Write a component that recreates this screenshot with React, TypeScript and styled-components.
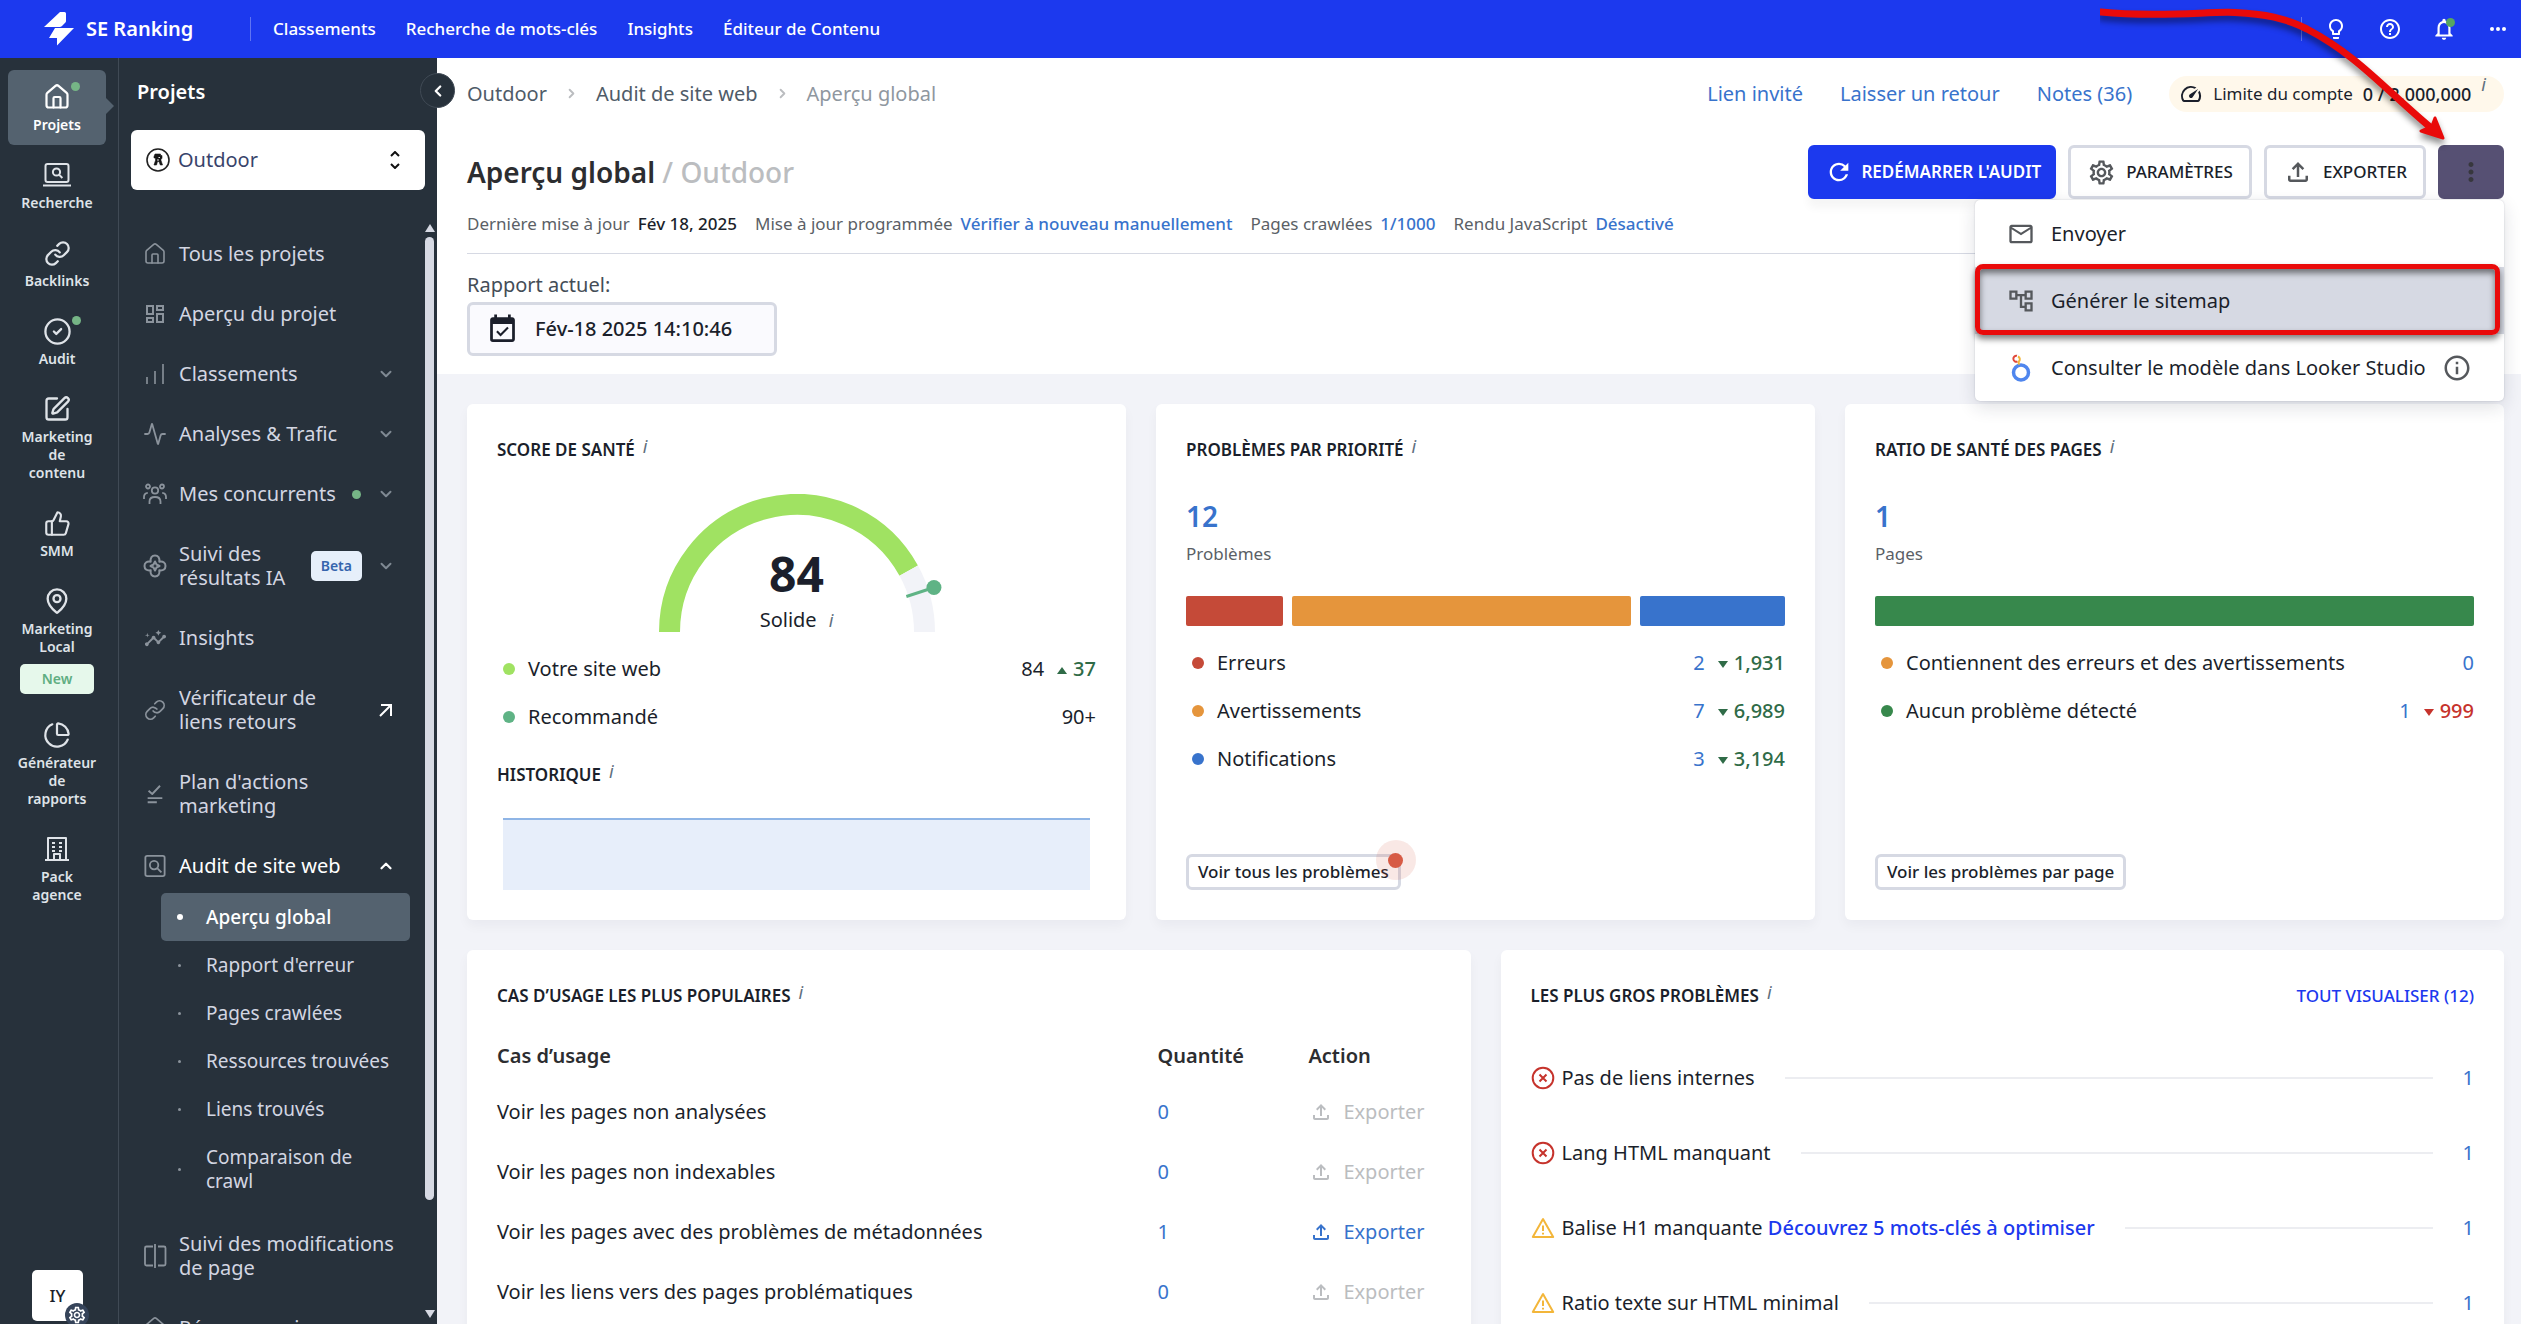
import React from "react";
import styled, { createGlobalStyle, css } from "styled-components";
import {
  MdOutlineAccountTree, MdOutlineFileUpload, MdOutlineSettings, MdOutlineSpeed,
  MdLightbulbOutline, MdHelpOutline, MdNotificationsNone, MdEventAvailable,
  MdMailOutline, MdRefresh, MdInsights, MdOutlineDashboard, MdMoreVert, MdInfoOutline,
} from "react-icons/md";
import {
  House, Link, CircleCheck, SquarePen, ThumbsUp, MapPin, ChartPie, Activity,
  ChevronDown, ChevronUp, ChevronLeft, ChevronRight,
} from "lucide-react";

const c = {
  brand: "#1c39ee", dark: "#27313b", active: "#54626f", line: "#d6d9e3", bg: "#f2f3f8",
  link: "#3873cc", ink: "#1b1f2b", grey: "#5b5f66", faint: "#bbbdc0", green: "#2f6b47",
};

const Global = createGlobalStyle`
  *, *::before, *::after { box-sizing: border-box; }
  body { margin: 0; font-family: "Noto Sans", "Open Sans", sans-serif; font-size: 20px; line-height: 24px; color: ${c.ink}; }
  a { color: inherit; text-decoration: none; }
  button, select { font: inherit; color: inherit; cursor: pointer; }
  ul { list-style: none; margin: 0; padding: 0; }
  h1, h2, p { margin: 0; font: inherit; }
  svg { flex: none; display: block; }
`;

const Shell = styled.div`
  position: relative; display: flex; flex-direction: column; height: 100vh; overflow: hidden; background: ${c.bg};
`;
const Body = styled.div`display: flex; flex: 1; min-height: 0;`;

/* ---------- top bar ---------- */
const TopBar = styled.header`
  display: flex; align-items: center; flex: none; height: 58px; padding: 0 11px 0 44px;
  background: ${c.brand}; color: #fff; font-size: 17px; font-weight: 500;
`;
const Brand = styled.a`display: flex; align-items: center; gap: 12px; width: 206px; font-size: 20px; font-weight: 600;`;
const TopNav = styled.nav`display: flex; gap: 30px; flex: 1; padding-left: 22px;`;
const Rule = styled.span`width: 1px; height: 24px; background: rgba(255, 255, 255, 0.3);`;
const TopIcons = styled.div`display: flex; align-items: center; gap: 30px; padding-left: 22px;`;
const IconButton = styled.button`
  position: relative; display: flex; align-items: center; justify-content: center;
  width: 24px; height: 24px; padding: 0; border: 0; background: none; color: #fff;
`;
const Dot = styled.span<{ $color: string; $size?: number }>`
  flex: none; width: ${(p) => p.$size ?? 12}px; height: ${(p) => p.$size ?? 12}px; border-radius: 50%; background: ${(p) => p.$color};
`;
const BellDot = styled(Dot)`position: absolute; top: 1px; right: 1px;`;
const RailDot = styled(Dot)`position: absolute; top: -3px; right: -9px;`;

/* ---------- icon rail ---------- */
const Rail = styled.nav`
  display: flex; flex-direction: column; flex: none; width: 119px; padding: 12px 12px 3px 8px;
  background: ${c.dark}; border-right: 1px solid #404a55; color: #dfe3e8;
`;
const RailList = styled.ul`display: flex; flex-direction: column; gap: 3px; width: 98px;`;
const RailItem = styled.a<{ $active?: boolean }>`
  position: relative; display: flex; flex-direction: column; align-items: center; gap: 7px; padding: 15px 0 11px;
  border-radius: 6px; font-size: 14px; line-height: 18px; font-weight: 600; text-align: center;
  ${(p) => p.$active && css`
    background: ${c.active}; color: #fff;
    &::after { content: ""; position: absolute; right: -8px; top: 28px; border: 8px solid transparent; border-right: 0; border-left-color: ${c.active}; }
  `}
`;
const RailIcon = styled.span`
  position: relative; display: flex; height: 24px; align-items: center;
`;
const NewBadge = styled.span`
  width: 74px; margin-top: 1px; border-radius: 5px; background: #e6f8eb; color: #5fae82; line-height: 30px;
`;
const Avatar = styled.button`
  position: relative; width: 51px; height: 51px; margin: auto 0 0 24px; padding: 0; border: 0; border-radius: 5px;
  background: #fff; color: ${c.ink}; font-size: 17px; font-weight: 500;
`;
const AvatarGear = styled.span`
  position: absolute; right: -6px; bottom: -6px; display: flex; align-items: center; justify-content: center;
  width: 24px; height: 24px; border-radius: 50%; background: #36445a; color: #fff;
`;

/* ---------- side menu ---------- */
const Side = styled.aside`
  position: relative; display: flex; flex-direction: column; flex: none; width: 318px; background: ${c.dark}; color: #d3d6e2;
`;
const SideTitle = styled.h2`padding: 22px 18px 20px; color: #fff; font-weight: 600;`;
const Collapse = styled.button`
  position: absolute; z-index: 2; right: -18px; top: 15px; display: flex; align-items: center; justify-content: center;
  width: 35px; height: 35px; padding: 0; border: 1px solid #404a55; border-radius: 50%; background: ${c.dark}; color: #fff;
`;
const ProjectPicker = styled.label`
  display: flex; align-items: center; gap: 8px; height: 60px; margin: 6px 12px 34px; padding: 0 25px 0 15px;
  border-radius: 6px; background: #fff; color: #39446b;
`;
const PickerSelect = styled.select`
  flex: 1; min-width: 0; height: 60px; padding: 0; border: 0; outline: 0; background: none; appearance: none;
`;
const SideScroll = styled.div`display: flex; flex: 1; min-height: 0; overflow: hidden;`;
const SideList = styled.ul`flex: 1; min-width: 0;`;
const SideItem = styled.a<{ $open?: boolean }>`
  display: flex; align-items: center; gap: 12px; padding: ${(p) => (p.$open ? "18px 30px 15px 24px" : "18px 30px 18px 24px")};
  color: ${(p) => (p.$open ? "#fff" : "inherit")};
  > span:first-child { color: #8b939c; }
  > svg:last-child { color: ${(p) => (p.$open ? "#fff" : "#7f8993")}; }
`;
const ItemIcon = styled.span`display: flex; flex: none; justify-content: center; width: 24px;`;
const ItemText = styled.span`flex: 1; margin-right: -12px; white-space: pre-line;`;
const BetaBadge = styled.span`
  padding: 0 10px; margin-right: 3px; border-radius: 5px; background: #e6effa; color: #3564ad; font-size: 14px; line-height: 30px; font-weight: 600;
`;
const DotSlot = styled.span`display: flex; margin-right: 4px;`;
const SubList = styled.ul`margin: 0 15px 9px 42px;`;
const SubItem = styled.a<{ $active?: boolean }>`
  display: flex; align-items: center; gap: 24px; padding: 12px 18px 12px 16px; border-radius: 5px; white-space: pre-line; font-size: 19px;
  ${(p) => p.$active && css`background: ${c.active}; color: #fff; font-weight: 500;`}
`;
const Bullet = styled.span<{ $active?: boolean }>`
  display: flex; justify-content: center; width: 5px;
  &::before { content: ""; width: ${(p) => (p.$active ? 6 : 3)}px; height: ${(p) => (p.$active ? 6 : 3)}px; flex: none; border-radius: 50%; background: ${(p) => (p.$active ? "#fff" : "#8b939c")}; }
`;
const ScrollTrack = styled.div`
  display: flex; flex-direction: column; align-items: center; flex: none; width: 9px; margin-right: 3px; padding-bottom: 6px;
`;
const ScrollArrow = styled.span<{ $down?: boolean }>`
  border: 5px solid transparent; border-top-width: ${(p) => (p.$down ? 8 : 0)}px; border-bottom-width: ${(p) => (p.$down ? 0 : 8)}px;
  border-${(p) => (p.$down ? "top" : "bottom")}-color: ${c.line};
`;
const ScrollThumb = styled.span`flex: 0 0 88%; width: 9px; margin: 5px 0 auto; border-radius: 5px; background: ${c.line};`;

/* ---------- page header ---------- */
const Main = styled.main`flex: 1; min-width: 0;`;
const PageHead = styled.section`padding: 0 17px 18px 30px; background: #fff;`;
const HeadRow = styled.div`display: flex; align-items: center; justify-content: space-between; height: 70px; padding-top: 1px;`;
const Crumbs = styled.nav`
  display: flex; align-items: center; gap: 17px; color: #4f5b68;
  svg { color: ${c.faint}; }
  span { color: #8f979f; }
`;
const HeadLinks = styled.div`display: flex; align-items: center; gap: 37px; color: ${c.link};`;
const LimitPill = styled.div`
  display: flex; align-items: center; gap: 10px; height: 36px; padding: 0 18px 0 10px; border-radius: 18px;
  background: #fff8eb; color: ${c.ink}; font-size: 17px;
  b { font-size: 18px; font-weight: 500; }
`;
const InfoMark = styled.em`
  align-self: flex-start; color: #5f6f7e; font-size: 18px; line-height: 16px; font-weight: 400;
`;
const TitleRow = styled.div`display: flex; align-items: center; justify-content: space-between; margin-top: 17px;`;
const Title = styled.h1`
  color: #2c2d30; font-size: 28px; line-height: 36px; font-weight: 600;
  span { color: ${c.faint}; font-weight: 500; }
`;
const Actions = styled.div`position: relative; display: flex; gap: 12px;`;
const ActionButton = styled.button<{ $kind?: "primary" | "menu" }>`
  display: flex; align-items: center; justify-content: center; gap: 10px; height: 54px; padding: 0 16px;
  border: 3px solid ${c.line}; border-radius: 6px; background: #fff; font-size: 17px; font-weight: 500;
  svg { color: #55585c; }
  ${(p) => p.$kind === "primary" && css`
    gap: 8px; padding: 0 12px 0 14px;
    border-color: ${c.brand}; background: ${c.brand}; color: #fff; font-weight: 600; box-shadow: 0 9px 9px rgba(0, 0, 0, 0.04);
    svg { color: #fff; }
  `}
  ${(p) => p.$kind === "menu" && css`
    width: 66px; padding: 0; border-color: #565073; background: #565073;
    svg { color: #37373d; }
  `}
`;
const Menu = styled.ul`
  position: absolute; z-index: 3; right: 0; top: 55px; width: 529px; border-radius: 5px; background: #fff;
  box-shadow: 0 6px 18px rgba(30, 36, 60, 0.14), 0 0 2px rgba(30, 36, 60, 0.2);
`;
const MenuItem = styled.button<{ $hot?: boolean }>`
  display: flex; align-items: center; gap: 16px; width: 100%; height: 67px; padding: 0 32px; border: 0;
  background: ${(p) => (p.$hot ? "#d6d9e3" : "none")}; text-align: left; white-space: nowrap;
  svg { color: #55585c; }
`;
const RedFrame = styled.li`
  position: absolute; z-index: 4; left: 0; right: 4px; top: 64px; height: 71px; border: 5px solid #e90a0a; border-radius: 8px;
  box-shadow: 0 4px 6px rgba(0, 0, 0, 0.5), inset 0 4px 6px rgba(0, 0, 0, 0.5); pointer-events: none;
`;
const RedArrow = styled.svg`
  position: absolute; z-index: 5; right: 61px; top: 0; pointer-events: none;
  g { filter: drop-shadow(0 5px 3px rgba(0, 0, 0, 0.45)); }
`;
const Meta = styled.dl`
  display: flex; align-items: center; gap: 18px; height: 55px; margin: 0; padding-bottom: 4px; border-bottom: 1px solid ${c.line};
  font-size: 17px; color: ${c.grey};
  div { display: flex; gap: 8px; }
`;
const MetaValue = styled.dd<{ $link?: boolean }>`margin: 0; font-weight: 500; color: ${(p) => (p.$link ? c.link : c.ink)};`;
const ReportLabel = styled.label`display: block; margin: 19px 0 5px; color: #444d57;`;
const ReportButton = styled.button`
  display: flex; align-items: center; gap: 16px; height: 54px; padding: 0 42px 0 16px; border: 3px solid ${c.line};
  border-radius: 6px; background: #fafafe; font-weight: 500;
`;

/* ---------- cards ---------- */
const Content = styled.div`display: grid; gap: 30px; padding: 30px 17px 30px 30px;`;
const CardRow = styled.div<{ $cols: number }>`display: grid; grid-template-columns: repeat(${(p) => p.$cols}, minmax(0, 1fr)); gap: 30px;`;
const Card = styled.section`
  display: flex; flex-direction: column; align-items: stretch; padding: 34px 30px 30px; border-radius: 6px; background: #fff;
  box-shadow: 0 6px 12px rgba(30, 36, 60, 0.04);
`;
const CardHead = styled.div`display: flex; justify-content: space-between;`;
const CardTitle = styled.h2`display: flex; gap: 8px; font-size: 17px; font-weight: 600;`;
const CardLink = styled.a`color: ${c.brand}; font-size: 17px; font-weight: 500;`;
const Gauge = styled.div`position: relative; display: flex; justify-content: center; height: 138px; margin: 32px 0 13px;`;
const GaugeLabel = styled.div`
  position: absolute; inset: 56px 0 0; display: flex; flex-direction: column; align-items: center; gap: 12px;
  b { font-size: 48px; line-height: 48px; }
  span { display: flex; align-items: center; gap: 12px; line-height: 20px; }
  em { align-self: center; line-height: 20px; }
`;
const Legend = styled.li`
  display: flex; align-items: center; gap: 13px; height: 48px; padding-left: 6px;
`;
const LegendName = styled.span`flex: 1;`;
const Count = styled.span<{ $link?: boolean }>`color: ${(p) => (p.$link ? c.link : "inherit")};`;
const Delta = styled.span<{ $color?: string }>`
  display: flex; align-items: center; gap: 6px; color: ${(p) => p.$color ?? c.green}; font-weight: 500;
`;
const Triangle = styled.span<{ $up?: boolean }>`
  margin-top: 3px; border: 5px solid transparent; border-top: ${(p) => (p.$up ? "0" : "7px solid currentColor")}; border-bottom: ${(p) => (p.$up ? "7px solid currentColor" : "0")};
`;
const HistoryTitle = styled.div`margin: 22px 0 31px;`;
const History = styled.div`height: 72px; margin: 0 6px; border-top: 2px solid #8fb5e6; background: #e7eefa;`;
const BigNumber = styled.p`margin: 36px 0 8px; color: ${c.link}; font-size: 28px; line-height: 36px; font-weight: 600;`;
const SmallNote = styled.p`color: ${c.grey}; font-size: 17px;`;
const Bar = styled.div`display: flex; gap: 9px; height: 30px; margin: 30px 0 13px;`;
const Segment = styled.span<{ $color: string; $share: number }>`flex: ${(p) => p.$share} 1 0; border-radius: 2px; background: ${(p) => p.$color};`;
const CardButton = styled.button`
  position: relative; align-self: flex-start; height: 36px; margin-top: auto; padding: 0 9px; border: 3px solid ${c.line}; border-radius: 6px;
  background: none; font-size: 17px; font-weight: 500;
`;
const Pulse = styled.span`
  position: absolute; right: -18px; top: -17px; display: flex; align-items: center; justify-content: center;
  width: 40px; height: 40px; border-radius: 50%; background: rgba(215, 91, 69, 0.14);
`;
const Table = styled.table`
  width: 100%; margin-top: 18px; border-collapse: collapse; text-align: left; table-layout: fixed;
  th { height: 56px; padding: 4px 0 0; font-weight: 600; color: #2c2d30; }
  th:nth-child(1) { width: 70%; } th:nth-child(2) { width: 16%; }
  td { height: 60px; padding: 0; }
  td a { color: ${c.link}; }
`;
const ExportButton = styled.button`
  display: flex; align-items: center; gap: 10px; padding: 0 0 0 1px; border: 0; background: none; color: ${c.link};
  &:disabled { color: ${c.faint}; }
`;
const Issues = styled.ul`margin-top: 32px;`;
const Issue = styled.li`
  display: flex; align-items: center; height: 75px; gap: 7px; color: ${c.ink};
  > a:last-child { color: ${c.link}; }
`;
const IssueText = styled.span`
  a { color: ${c.brand}; font-weight: 500; }
`;
const Leader = styled.span`flex: 1; height: 2px; margin: 0 23px; background: #ecedf1;`;

/* ---------- drawings ---------- */
const S = (p: { size?: number; w?: number; children: React.ReactNode }) => (
  <svg width={p.size ?? 24} height={p.size ?? 24} viewBox="0 0 24 24" fill="none" stroke="currentColor" strokeWidth={p.w ?? 2} strokeLinejoin="round">{p.children}</svg>
);
const Logo = () => (
  <svg width="30" height="34" viewBox="0 0 30 34" fill="#fff"><path d="M16 0h4.500q1.500 0 1.500 1.500V9q0 1-.8 1.800L18 14q-1 1-2.500 1H0zM11 16h19L13 33.500V26H5z" /></svg>
);
const Laptop = () => (
  <svg width="28" height="24" viewBox="0 0 28 24" fill="none" stroke="currentColor" strokeWidth="2"><rect x="2.5" y="1" width="23" height="18" rx="2" /><path d="M0 22.5h28" /><circle cx="13.5" cy="9" r="3.6" /><path d="M16 11.6l3.4 3.4" /></svg>
);
const Building = () => (
  <S w={2}><path d="M3 23V1h18v22M0 23h24M9 23v-6h6v6M7 6h3M14 6h3M7 10h3M14 10h3M7 14h3M14 14h3" /></S>
);
const Favicon = () => (
  <svg width="24" height="24" viewBox="0 0 24 24"><circle cx="12" cy="12" r="11" fill="#fff" stroke="#222" strokeWidth="1.6" /><path d="M9 6h5.500v1.500H16v3h-1v2l1.500 4.500h-2.200L13 13.500h-1.500L10.500 17H8l1.500-4.500V10H8V8.500z" fill="#161616" stroke="#161616" strokeWidth=".6" /><path d="M12.500 9.500h1.500M11 12h2" stroke="#fff" strokeWidth=".9" /></svg>
);
const Bars = () => <S w={1.6}><path d="M4 22v-7M12 22V9M20 22V2" /></S>;
const People = () => (
  <S w={1.8}><circle cx="12" cy="8.500" r="3.200" /><circle cx="5" cy="4.500" r="2" /><circle cx="19" cy="4.500" r="2" /><path d="M6.500 22v-2.500c0-2.800 2-4.500 5.500-4.500s5.500 1.700 5.500 4.500V22M1 17v-2c0-2.500 1.400-4 3.800-4.200M23 17v-2c0-2.500-1.400-4-3.800-4.200" /></S>
);
const Flower = () => (
  <S w={2}><path d="M7.700 7.700C7 3.500 9 1.500 12 1.500s5 2 4.300 6.200C20.500 7 22.500 9 22.500 12s-2 5-6.200 4.300c.7 4.200-1.300 6.200-4.300 6.200s-5-2-4.300-6.200C3.500 17 1.500 15 1.500 12s2-5 6.200-4.300z" /><path d="M12 7.500l1.500 3 3 1.500-3 1.500-1.500 3-1.500-3-3-1.500 3-1.500z" /></S>
);
const Plan = () => <S size={22} w={2}><path d="M5 8.500L9 12 17.500 3M4 16.500h16M4 21h10" /></S>;
const PageSearch = () => (
  <S size={22}><rect x="1.500" y="1" width="21" height="22" rx="2" /><circle cx="11" cy="11" r="4.600" /><path d="M14.400 14.400l4.600 4.600" /></S>
);
const Compare = () => <S w={1.8}><path d="M12 0v24M10 2.500H3.500a1.500 1.500 0 0 0-1.500 1.500v16a1.500 1.500 0 0 0 1.500 1.500H10M15 2.500h6a1.500 1.500 0 0 1 1.500 1.500v16a1.500 1.500 0 0 1-1.500 1.500H15" /></S>;
const OutArrow = () => (
  <svg width="18" height="18" viewBox="0 0 18 18" fill="none" stroke="#fff" strokeWidth="2"><path d="M4 4h10v11M14 4L3 15" /></svg>
);
const UpDown = () => (
  <svg width="10" height="18" viewBox="0 0 10 18" fill="none" stroke="#111" strokeWidth="2"><path d="M1 5l4-4 4 4M1 13l4 4 4-4" /></svg>
);
const Looker = () => (
  <svg width="28" height="28" viewBox="-1.5 0 28 28" fill="none"><circle cx="12.500" cy="18.500" r="7.500" stroke="#4f86ee" strokeWidth="3.500" /><path d="M9 7.500A3 3 0 1 1 8.500 1.800" stroke="#e0483a" strokeWidth="2" /><path d="M9.500 2.500a3 3 0 0 1 .6 5.200l.4 3" stroke="#f3b63a" strokeWidth="2" /></svg>
);
const ErrorIcon = () => (
  <svg width="24" height="24" viewBox="0 0 24 24" fill="none" stroke="#c6332c" strokeWidth="2"><circle cx="12" cy="12" r="10.300" /><path d="M8.500 8.500l7 7M15.500 8.500l-7 7" /></svg>
);
const WarnIcon = () => (
  <svg width="24" height="24" viewBox="0 0 24 24" fill="none" stroke="#f3b63a" strokeWidth="2" strokeLinejoin="round"><path d="M12 3L1.800 21h20.400z" /><path d="M12 9.500v5.500M12 16.800v1.800" /></svg>
);
const arcPoint = (deg: number, r: number) => {
  const a = (deg * Math.PI) / 180;
  return `${(150 - r * Math.cos(a)).toFixed(2)} ${(138 - r * Math.sin(a)).toFixed(2)}`;
};
const GaugeArc = ({ score, target }: { score: number; target: number }) => {
  const r = 127.5, end = score * 1.8, mark = target * 1.8;
  const [mx, my] = arcPoint(mark, 144).split(" ");
  return (
    <svg width="300" height="138" viewBox="0 0 300 138" fill="none" strokeWidth="21">
      <path d={`M${arcPoint(0, r)}A${r} ${r} 0 0 1 ${arcPoint(end, r)}`} stroke="#a0e262" />
      <path d={`M${arcPoint(end, r)}A${r} ${r} 0 0 1 ${arcPoint(180, r)}`} stroke="#f2f3f8" />
      <path d={`M${arcPoint(mark, 115)}L${mx} ${my}`} stroke="#5fb385" strokeWidth="3" />
      <circle cx={mx} cy={my} r="7.500" fill="#5fb385" />
    </svg>
  );
};

/* ---------- data ---------- */
const rail = [
  { text: "Projets", icon: <House size={28} strokeWidth={1.9} />, dot: true, active: true },
  { text: "Recherche", icon: <Laptop /> },
  { text: "Backlinks", icon: <Link size={27} /> },
  { text: "Audit", icon: <CircleCheck size={29} strokeWidth={1.9} />, dot: true },
  { text: "Marketing\nde\ncontenu", icon: <SquarePen size={28} /> },
  { text: "SMM", icon: <ThumbsUp size={27} strokeWidth={1.9} /> },
  { text: "Marketing\nLocal", icon: <MapPin size={28} />, isNew: true },
  { text: "Générateur\nde\nrapports", icon: <ChartPie size={28} strokeWidth={1.9} /> },
  { text: "Pack\nagence", icon: <Building /> },
];
type Entry = { text: string; icon: React.ReactNode; tail?: "down" | "up" | "out"; beta?: boolean; dot?: boolean; open?: boolean };
const menu: Entry[] = [
  { text: "Tous les projets", icon: <House size={24} strokeWidth={1.6} /> },
  { text: "Aperçu du projet", icon: <MdOutlineDashboard size={24} /> },
  { text: "Classements", icon: <Bars />, tail: "down" },
  { text: "Analyses & Trafic", icon: <Activity size={24} strokeWidth={1.8} />, tail: "down" },
  { text: "Mes concurrents", icon: <People />, tail: "down", dot: true },
  { text: "Suivi des\nrésultats IA", icon: <Flower />, tail: "down", beta: true },
  { text: "Insights", icon: <MdInsights size={23} /> },
  { text: "Vérificateur de\nliens retours", icon: <Link size={22} strokeWidth={1.9} />, tail: "out" },
  { text: "Plan d'actions\nmarketing", icon: <Plan /> },
  { text: "Audit de site web", icon: <PageSearch />, tail: "up", open: true },
];
const menuEnd: Entry[] = [
  { text: "Suivi des modifications\nde page", icon: <Compare /> },
  { text: "Réseaux sociaux", icon: <House size={24} strokeWidth={1.6} /> },
];
const sub = ["Aperçu global", "Rapport d'erreur", "Pages crawlées", "Ressources trouvées", "Liens trouvés", "Comparaison de\ncrawl"];
const meta: [string, string, boolean][] = [
  ["Dernière mise à jour", "Fév 18, 2025", false],
  ["Mise à jour programmée", "Vérifier à nouveau manuellement", true],
  ["Pages crawlées", "1/1000", true],
  ["Rendu JavaScript", "Désactivé", true],
];
const priorities: [string, string, string, string, number][] = [
  ["Erreurs", "#c54a38", "2", "1,931", 2],
  ["Avertissements", "#e5953c", "7", "6,989", 7],
  ["Notifications", "#3873cc", "3", "3,194", 3],
];
const cases: [string, number][] = [
  ["Voir les pages non analysées", 0],
  ["Voir les pages non indexables", 0],
  ["Voir les pages avec des problèmes de métadonnées", 1],
  ["Voir les liens vers des pages problématiques", 0],
];
const issues: { text: string; error?: boolean; tip?: string }[] = [
  { text: "Pas de liens internes", error: true },
  { text: "Lang HTML manquant", error: true },
  { text: "Balise H1 manquante", tip: "Découvrez 5 mots-clés à optimiser" },
  { text: "Ratio texte sur HTML minimal" },
];

const SideEntry = ({ e }: { e: Entry }) => (
  <SideItem href="#" $open={e.open}>
    <ItemIcon>{e.icon}</ItemIcon>
    <ItemText>{e.text}</ItemText>
    {e.dot && <DotSlot><Dot $color="#76b586" $size={9} /></DotSlot>}
    {e.beta && <BetaBadge>Beta</BetaBadge>}
    {e.tail === "down" && <ChevronDown size={18} strokeWidth={2.6} />}
    {e.tail === "up" && <ChevronUp size={18} strokeWidth={3} />}
    {e.tail === "out" && <OutArrow />}
  </SideItem>
);
const Heading = ({ children }: { children: React.ReactNode }) => (
  <CardTitle>{children}<InfoMark>i</InfoMark></CardTitle>
);

export default function App() {
  return (
    <Shell>
      <Global />
      <TopBar>
        <Brand href="#"><Logo />SE Ranking</Brand>
        <Rule />
        <TopNav>
          <a href="#">Classements</a>
          <a href="#">Recherche de mots-clés</a>
          <a href="#">Insights</a>
          <a href="#">Éditeur de Contenu</a>
        </TopNav>
        <Rule />
        <TopIcons>
          <IconButton aria-label="Conseils"><MdLightbulbOutline size={24} /></IconButton>
          <IconButton aria-label="Aide"><MdHelpOutline size={24} /></IconButton>
          <IconButton aria-label="Alertes"><MdNotificationsNone size={26} /><BellDot $color="#57a55f" $size={9} /></IconButton>
          <IconButton aria-label="Plus">
            <svg width="18" height="4" viewBox="0 0 18 4" fill="#fff"><circle cx="3" cy="2" r="2" /><circle cx="9" cy="2" r="2" /><circle cx="15" cy="2" r="2" /></svg>
          </IconButton>
        </TopIcons>
      </TopBar>

      <Body>
        <Rail>
          <RailList>
            {rail.map((r) => (
              <li key={r.text}>
                <RailItem href="#" $active={r.active}>
                  <RailIcon>{r.icon}{r.dot && <RailDot $color="#76b586" $size={9} />}</RailIcon>
                  <span>{r.text.split("\n").map((t) => <React.Fragment key={t}>{t}<br /></React.Fragment>)}</span>
                  {r.isNew && <NewBadge>New</NewBadge>}
                </RailItem>
              </li>
            ))}
          </RailList>
          <Avatar>IY<AvatarGear><MdOutlineSettings size={20} /></AvatarGear></Avatar>
        </Rail>

        <Side>
          <SideTitle>Projets</SideTitle>
          <Collapse aria-label="Réduire"><ChevronLeft size={18} strokeWidth={3} /></Collapse>
          <ProjectPicker>
            <Favicon />
            <PickerSelect aria-label="Projet"><option>Outdoor</option></PickerSelect>
            <UpDown />
          </ProjectPicker>
          <SideScroll>
            <SideList>
              {menu.map((e) => <li key={e.text}><SideEntry e={e} /></li>)}
              <li>
                <SubList>
                  {sub.map((t, i) => (
                    <li key={t}><SubItem href="#" $active={i === 0}><Bullet $active={i === 0} />{t}</SubItem></li>
                  ))}
                </SubList>
              </li>
              {menuEnd.map((e) => <li key={e.text}><SideEntry e={e} /></li>)}
            </SideList>
            <ScrollTrack><ScrollArrow /><ScrollThumb /><ScrollArrow $down /></ScrollTrack>
          </SideScroll>
        </Side>

        <Main>
          <PageHead>
            <HeadRow>
              <Crumbs>
                <a href="#">Outdoor</a><ChevronRight size={15} strokeWidth={3} />
                <a href="#">Audit de site web</a><ChevronRight size={15} strokeWidth={3} />
                <span>Aperçu global</span>
              </Crumbs>
              <HeadLinks>
                <a href="#">Lien invité</a>
                <a href="#">Laisser un retour</a>
                <a href="#">Notes (36)</a>
                <LimitPill><MdOutlineSpeed size={24} />Limite du compte <b>0 / 2,000,000</b><InfoMark>i</InfoMark></LimitPill>
              </HeadLinks>
            </HeadRow>
            <TitleRow>
              <Title>Aperçu global <span>/ Outdoor</span></Title>
              <Actions>
                <ActionButton $kind="primary"><MdRefresh size={28} />REDÉMARRER L'AUDIT</ActionButton>
                <ActionButton><MdOutlineSettings size={29} />PARAMÈTRES</ActionButton>
                <ActionButton><MdOutlineFileUpload size={30} />EXPORTER</ActionButton>
                <ActionButton $kind="menu" aria-label="Plus d'actions"><MdMoreVert size={30} /></ActionButton>
                <Menu>
                  <li><MenuItem><MdMailOutline size={28} />Envoyer</MenuItem></li>
                  <li><MenuItem $hot><MdOutlineAccountTree size={28} />Générer le sitemap</MenuItem></li>
                  <li><MenuItem><Looker />Consulter le modèle dans Looker Studio<MdInfoOutline size={30} /></MenuItem></li>
                  <RedFrame aria-hidden="true" />
                </Menu>
              </Actions>
            </TitleRow>
            <Meta>
              {meta.map(([k, v, link]) => (
                <div key={k}><dt>{k}</dt><MetaValue $link={link}>{link ? <a href="#">{v}</a> : v}</MetaValue></div>
              ))}
            </Meta>
            <ReportLabel htmlFor="report">Rapport actuel:</ReportLabel>
            <ReportButton id="report"><MdEventAvailable size={33} />Fév-18 2025 14:10:46</ReportButton>
          </PageHead>

          <Content>
            <CardRow $cols={3}>
              <Card>
                <Heading>SCORE DE SANTÉ</Heading>
                <Gauge>
                  <GaugeArc score={84} target={90} />
                  <GaugeLabel><b>84</b><span>Solide <InfoMark>i</InfoMark></span></GaugeLabel>
                </Gauge>
                <ul>
                  <Legend><Dot $color="#a0e262" /><LegendName>Votre site web</LegendName><Count>84</Count><Delta><Triangle $up />37</Delta></Legend>
                  <Legend><Dot $color="#5fb385" /><LegendName>Recommandé</LegendName><Count>90+</Count></Legend>
                </ul>
                <HistoryTitle><Heading>HISTORIQUE</Heading></HistoryTitle>
                <History />
              </Card>
              <Card>
                <Heading>PROBLÈMES PAR PRIORITÉ</Heading>
                <BigNumber>12</BigNumber>
                <SmallNote>Problèmes</SmallNote>
                <Bar>{priorities.map((p) => <Segment key={p[0]} $color={p[1]} $share={p[4]} />)}</Bar>
                <ul>
                  {priorities.map(([name, color, n, d]) => (
                    <Legend key={name}><Dot $color={color} /><LegendName>{name}</LegendName><Count $link>{n}</Count><Delta><Triangle />{d}</Delta></Legend>
                  ))}
                </ul>
                <CardButton>Voir tous les problèmes<Pulse><Dot $color="#d75b45" $size={15} /></Pulse></CardButton>
              </Card>
              <Card>
                <Heading>RATIO DE SANTÉ DES PAGES</Heading>
                <BigNumber>1</BigNumber>
                <SmallNote>Pages</SmallNote>
                <Bar><Segment $color="#37884c" $share={1} /></Bar>
                <ul>
                  <Legend><Dot $color="#e5953c" /><LegendName>Contiennent des erreurs et des avertissements</LegendName><Count $link>0</Count></Legend>
                  <Legend><Dot $color="#37884c" /><LegendName>Aucun problème détecté</LegendName><Count $link>1</Count><Delta $color="#c6332c"><Triangle />999</Delta></Legend>
                </ul>
                <CardButton>Voir les problèmes par page</CardButton>
              </Card>
            </CardRow>

            <CardRow $cols={2}>
              <Card>
                <Heading>CAS D’USAGE LES PLUS POPULAIRES</Heading>
                <Table>
                  <thead><tr><th>Cas d’usage</th><th>Quantité</th><th>Action</th></tr></thead>
                  <tbody>
                    {cases.map(([name, n]) => (
                      <tr key={name}>
                        <td>{name}</td>
                        <td><a href="#">{n}</a></td>
                        <td><ExportButton disabled={n === 0}><MdOutlineFileUpload size={24} />Exporter</ExportButton></td>
                      </tr>
                    ))}
                  </tbody>
                </Table>
              </Card>
              <Card>
                <CardHead><Heading>LES PLUS GROS PROBLÈMES</Heading><CardLink href="#">TOUT VISUALISER (12)</CardLink></CardHead>
                <Issues>
                  {issues.map((it) => (
                    <Issue key={it.text}>
                      {it.error ? <ErrorIcon /> : <WarnIcon />}
                      <IssueText>{it.text}{it.tip && <> <a href="#">{it.tip}</a></>}</IssueText>
                      <Leader />
                      <a href="#">1</a>
                    </Issue>
                  ))}
                </Issues>
              </Card>
            </CardRow>
          </Content>
        </Main>
      </Body>

      <RedArrow width="360" height="160" viewBox="0 0 360 160" fill="none" aria-hidden="true">
        <g>
          <path d="M1 12C60 18 110 11 135 12.500C165 14 185 18 207 29C260 57 285 90 336 132" stroke="#e90a0a" strokeWidth="7" strokeLinecap="round" />
          <path d="M343 138L321 131 332 126 335 118z" fill="#e90a0a" stroke="#e90a0a" strokeWidth="3" strokeLinejoin="round" />
        </g>
      </RedArrow>
    </Shell>
  );
}
